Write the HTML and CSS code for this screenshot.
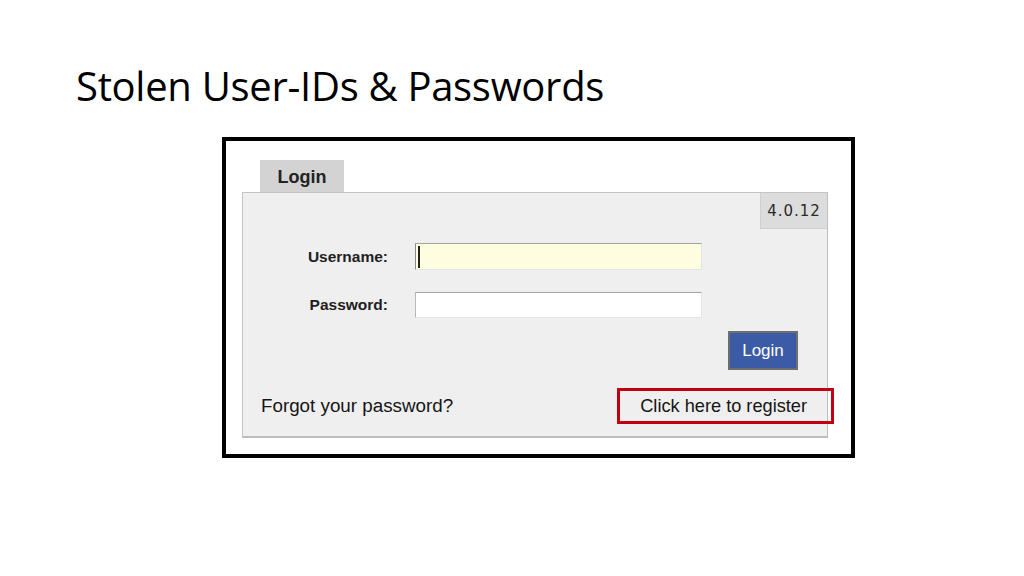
FILE: index.html
```html
<!DOCTYPE html>
<html>
<head>
<meta charset="utf-8">
<link rel="stylesheet" href="styles.css">
</head>
<body>
<div class="slide">
  <h1 class="title">Stolen User-IDs &amp; Passwords</h1>
  <div class="frame">
    <div class="tab">Login</div>
    <div class="panel">
      <div class="version">4.0.12</div>
      <div class="form">
        <div class="label">Username:</div>
        <div class="field field-user"><span class="caret"></span></div>
        <div class="label">Password:</div>
        <div class="field"></div>
      </div>
      <div class="actions">
        <div class="btn">Login</div>
      </div>
      <div class="links">
        <span class="link">Forgot your password?</span>
        <span class="link register">Click here to register</span>
      </div>
    </div>
  </div>
</div>
</body>
</html>
```

FILE: styles.css
```css
html, body {
  margin: 0;
  padding: 0;
  background: #ffffff;
}
.slide {
  width: 1024px;
  height: 576px;
  overflow: hidden;
}
.title {
  margin: 0;
  padding: 62px 0 0 76px;
  font-family: "Open Sans", sans-serif;
  font-weight: 400;
  font-size: 40px;
  line-height: 48px;
  letter-spacing: -0.3px;
  color: #000;
}
.frame {
  box-sizing: border-box;
  margin: 27px 0 0 222px;
  width: 633px;
  height: 321px;
  border: 4px solid #000;
  padding: 19px 23px 15px 16px;
  display: flex;
  flex-direction: column;
}
.tab {
  box-sizing: border-box;
  margin-left: 18px;
  width: 84px;
  height: 32px;
  background: #d3d3d3;
  font-family: "Liberation Sans", Arial, sans-serif;
  font-weight: bold;
  font-size: 18px;
  color: #222;
  display: flex;
  align-items: center;
  justify-content: center;
  padding-top: 3px;
}
.panel {
  box-sizing: border-box;
  height: 246px;
  background: #efefef;
  border: 1px solid #c4c4c4;
  border-right-color: #bdbdbd;
  border-bottom: 2px solid #bdbdbd;
  display: flex;
  flex-direction: column;
}
.version {
  align-self: flex-end;
  box-sizing: border-box;
  width: 67px;
  height: 36px;
  background: #dcdcdc;
  border-left: 1px solid #cfcfcf;
  border-bottom: 1px solid #cfcfcf;
  font-family: "DejaVu Sans", sans-serif;
  font-size: 15px;
  letter-spacing: 1px;
  color: #2a2a2a;
  display: flex;
  align-items: center;
  justify-content: center;
}
.form {
  margin-top: 14px;
  display: grid;
  grid-template-columns: 145px 287px;
  grid-template-rows: 27px 26px;
  column-gap: 27px;
  row-gap: 22px;
  align-items: center;
}
.label {
  text-align: right;
  font-family: "Liberation Sans", Arial, sans-serif;
  font-weight: bold;
  font-size: 15.5px;
  color: #1e1e1e;
}
.field {
  box-sizing: border-box;
  height: 100%;
  background: #fff;
  border: 1px solid #e4e4e4;
  border-top-color: #a3a3a3;
  border-left-color: #b8b8b8;
  display: flex;
  align-items: center;
}
.field-user {
  background: #fffde0;
  border-left-color: #8a8a8a;
}
.caret {
  display: block;
  margin-left: 2px;
  width: 2px;
  height: 22px;
  background: #222;
}
.actions {
  margin-top: 13px;
  padding-right: 29px;
  display: flex;
  justify-content: flex-end;
}
.btn {
  box-sizing: border-box;
  width: 70px;
  height: 39px;
  background: #3b5ba7;
  border: 2px solid #6e6e6e;
  color: #fff;
  font-family: "Liberation Sans", Arial, sans-serif;
  font-size: 17px;
  display: flex;
  align-items: center;
  justify-content: center;
}
.links {
  margin-top: 25px;
  padding: 0 20px 0 18px;
  display: flex;
  justify-content: space-between;
  font-family: "Liberation Sans", Arial, sans-serif;
  font-size: 18.8px;
  line-height: 22px;
  color: #151515;
}
.register {
  position: relative;
  font-size: 18.2px;
}
.register::after {
  content: "";
  position: absolute;
  left: -23px;
  right: -27px;
  top: -7px;
  bottom: -7px;
  border: 3px solid #c00010;
}
```
